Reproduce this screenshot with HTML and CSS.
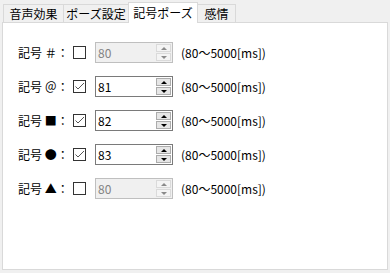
FILE: index.html
```html
<!DOCTYPE html>
<html lang="ja">
<head>
<meta charset="utf-8">
<link rel="stylesheet" href="styles.css">
</head>
<body>
<div class="window">
  <div class="tabs">
    <div class="tab t1">音声効果</div>
    <div class="tab t2">ポーズ設定</div>
    <div class="tab t3 selected">記号ポーズ</div>
    <div class="tab t4">感情</div>
  </div>
  <div class="panel">
    <div class="row">
      <span class="label">記号 ＃：</span>
      <span class="check"></span>
      <span class="spin disabled"><span class="val">80</span><span class="btns"><span class="up"></span><span class="down"></span></span></span>
      <span class="range">(80～5000[ms])</span>
    </div>
    <div class="row">
      <span class="label">記号 ＠：</span>
      <span class="check"><svg width="11" height="11" viewBox="0 0 11 11"><polyline points="1.5,5.5 4,8 10,2" fill="none" stroke="#555" stroke-width="1"/></svg></span>
      <span class="spin"><span class="val">81</span><span class="btns"><span class="up"></span><span class="down"></span></span></span>
      <span class="range">(80～5000[ms])</span>
    </div>
    <div class="row">
      <span class="label">記号 ■：</span>
      <span class="check"><svg width="11" height="11" viewBox="0 0 11 11"><polyline points="1.5,5.5 4,8 10,2" fill="none" stroke="#555" stroke-width="1"/></svg></span>
      <span class="spin"><span class="val">82</span><span class="btns"><span class="up"></span><span class="down"></span></span></span>
      <span class="range">(80～5000[ms])</span>
    </div>
    <div class="row">
      <span class="label">記号 ●：</span>
      <span class="check"><svg width="11" height="11" viewBox="0 0 11 11"><polyline points="1.5,5.5 4,8 10,2" fill="none" stroke="#555" stroke-width="1"/></svg></span>
      <span class="spin"><span class="val">83</span><span class="btns"><span class="up"></span><span class="down"></span></span></span>
      <span class="range">(80～5000[ms])</span>
    </div>
    <div class="row">
      <span class="label">記号 ▲：</span>
      <span class="check"></span>
      <span class="spin disabled"><span class="val">80</span><span class="btns"><span class="up"></span><span class="down"></span></span></span>
      <span class="range">(80～5000[ms])</span>
    </div>
  </div>
</div>
</body>
</html>
```
FILE: styles.css
```css
html, body {
  margin: 0;
  padding: 0;
  background: #f0f0f0;
}
body {
  font-family: "Noto Sans CJK JP", "Noto Sans", sans-serif;
  font-size: 12px;
  color: #000;
  width: 390px;
  height: 273px;
  overflow: hidden;
}
.window {
  padding: 2px 2px 0 2px;
}
.tabs {
  display: flex;
  align-items: flex-end;
  height: 20px;
  padding-left: 1px;
  position: relative;
  z-index: 1;
}
.tab {
  box-sizing: border-box;
  height: 18px;
  border: 1px solid #d9d9d9;
  border-bottom: none;
  margin-right: -1px;
  display: flex;
  align-items: center;
  justify-content: center;
  line-height: 1;
  background: #f0f0f0;
}
.t1 { width: 61px; }
.t2 { width: 66px; }
.t3 { width: 70px; }
.t4 { width: 39px; }
.tab.selected {
  height: 21px;
  margin-bottom: -1px;
  background: #fff;
  position: relative;
  z-index: 2;
  padding-bottom: 1px;
}
.panel {
  box-sizing: border-box;
  height: 248px;
  width: 386px;
  background: #fff;
  border: 1px solid #d9d9d9;
  padding: 19px 0 0 15px;
  display: flex;
  flex-direction: column;
  gap: 13px;
}
.row {
  display: flex;
  align-items: center;
  height: 21px;
}
.label {
  width: 55px;
  white-space: nowrap;
  line-height: 1;
}
.check {
  box-sizing: border-box;
  width: 13px;
  height: 13px;
  border: 1px solid #333;
  background: #fff;
  display: flex;
  align-items: center;
  justify-content: center;
}
.check svg { display: block; }
.spin {
  box-sizing: border-box;
  margin-left: 9px;
  width: 78px;
  height: 21px;
  border: 1px solid #7a7a7a;
  background: #fff;
  display: flex;
  align-items: stretch;
}
.spin .val {
  flex: 1;
  padding-left: 2px;
  line-height: 19px;
}
.btns {
  width: 15px;
  margin: 1px 1px 1px 0;
  display: flex;
  flex-direction: column;
  gap: 1px;
}
.up, .down {
  flex: 1;
  box-sizing: border-box;
  background: #e6e6e6;
  border: 1px solid #acacac;
  display: flex;
  align-items: center;
  justify-content: center;
}
.up::before {
  content: "";
  border-left: 3px solid transparent;
  border-right: 3px solid transparent;
  border-bottom: 3px solid #000;
}
.down::before {
  content: "";
  border-left: 3px solid transparent;
  border-right: 3px solid transparent;
  border-top: 3px solid #000;
}
.spin.disabled {
  border-color: #bfbfbf;
  background: #f0f0f0;
  color: #838383;
}
.spin.disabled .up, .spin.disabled .down {
  background: #f4f4f4;
  border-color: #dadada;
}
.spin.disabled .up::before { border-bottom-color: #8a8a8a; }
.spin.disabled .down::before { border-top-color: #8a8a8a; }
.range {
  margin-left: 8px;
  white-space: nowrap;
  line-height: 1;
}
```
